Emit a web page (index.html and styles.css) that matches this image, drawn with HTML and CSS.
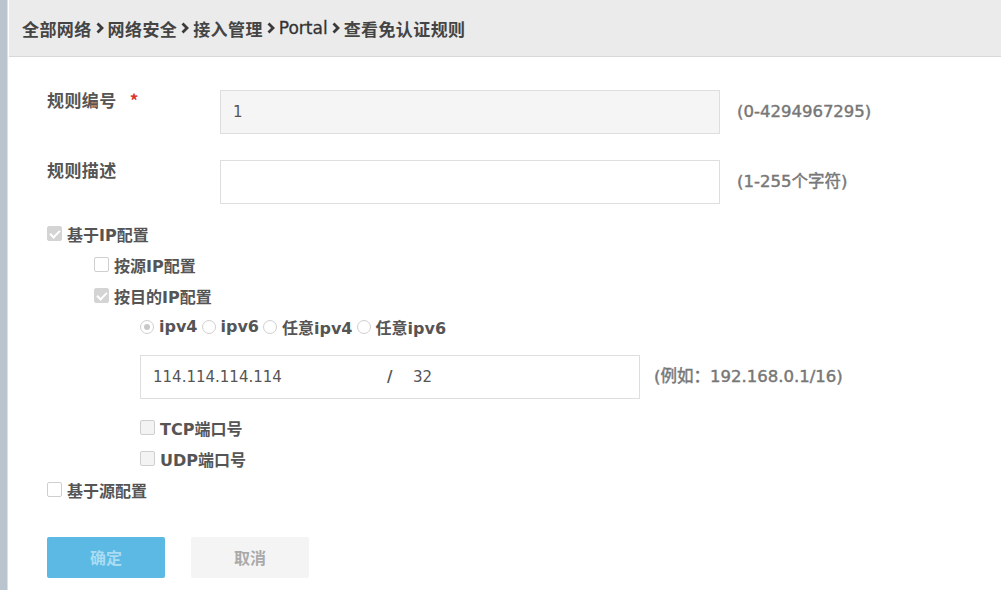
FILE: index.html
```html
<!DOCTYPE html>
<html lang="zh">
<head>
<meta charset="utf-8">
<link rel="stylesheet" href="styles.css">
</head>
<body>
<div class="page">
  <div class="sidebar"></div>
  <div class="main">
    <div class="header">
      <span>全部网络</span><svg class="chev" viewBox="0 0 8 12"><path d="M1.5 1.5 L6 6 L1.5 10.5"/></svg><span>网络安全</span><svg class="chev" viewBox="0 0 8 12"><path d="M1.5 1.5 L6 6 L1.5 10.5"/></svg><span>接入管理</span><svg class="chev" viewBox="0 0 8 12"><path d="M1.5 1.5 L6 6 L1.5 10.5"/></svg><span class="latin">Portal</span><svg class="chev" viewBox="0 0 8 12"><path d="M1.5 1.5 L6 6 L1.5 10.5"/></svg><span>查看免认证规则</span>
    </div>
    <div class="form">
      <div class="row">
        <div class="label">规则编号 <span class="req">*</span></div>
        <div class="input disabled">1</div>
        <div class="hint">(0-4294967295)</div>
      </div>
      <div class="row row2">
        <div class="label">规则描述</div>
        <div class="input"></div>
        <div class="hint">(1-255个字符)</div>
      </div>
      <div class="checks">
        <div class="line"><span class="cb checked"></span><span class="txt">基于IP配置</span></div>
        <div class="line lv1"><span class="cb"></span><span class="txt">按源IP配置</span></div>
        <div class="line lv1"><span class="cb checked"></span><span class="txt">按目的IP配置</span></div>
        <div class="line lv2 radios">
          <span class="rd on"></span><span class="rtxt">ipv4</span>
          <span class="rd"></span><span class="rtxt">ipv6</span>
          <span class="rd"></span><span class="rtxt">任意ipv4</span>
          <span class="rd"></span><span class="rtxt">任意ipv6</span>
        </div>
        <div class="iprow lv2">
          <div class="ipinput"><span class="ip">114.114.114.114</span><span class="slash">/</span><span class="mask">32</span></div>
          <div class="hint">(例如：192.168.0.1/16)</div>
        </div>
        <div class="line lv2 first"><span class="cb grey"></span><span class="txt">TCP端口号</span></div>
        <div class="line lv2"><span class="cb grey"></span><span class="txt">UDP端口号</span></div>
        <div class="line"><span class="cb"></span><span class="txt">基于源配置</span></div>
      </div>
      <div class="buttons">
        <div class="btn ok">确定</div>
        <div class="btn cancel">取消</div>
      </div>
    </div>
  </div>
</div>
</body>
</html>
```
FILE: styles.css
```css
html, body {
  margin: 0;
  padding: 0;
  background: #fff;
}
body {
  font-family: "DejaVu Sans", "Noto Sans CJK SC", sans-serif;
  color: #555;
  width: 1001px;
  height: 590px;
  overflow: hidden;
}
.page {
  display: flex;
  height: 590px;
}
.sidebar {
  width: 7px;
  background: #bac4ce;
  border-right: 1px solid #dde1e5;
  margin-right: 1px;
  flex: none;
}
.main {
  flex: 1;
}
.header {
  height: 56px;
  background: #ebebeb;
  border-bottom: 1px solid #d8d8d8;
  display: flex;
  align-items: center;
  padding-left: 13px;
  font-family: "Noto Sans CJK SC", sans-serif;
  font-size: 17px;
  font-weight: 700;
  color: #444;
  letter-spacing: 0.4px;
}
.header .latin {
  font-family: "DejaVu Sans", sans-serif;
  font-weight: 400;
  font-size: 17px;
  color: #333;
  letter-spacing: 0;
  -webkit-text-stroke: 0.3px #333;
}
.chev {
  width: 8px;
  height: 12px;
  margin: 0 4px 0 4px;
  flex: none;
}
.chev path {
  fill: none;
  stroke: #3a3a3a;
  stroke-width: 2.8;
}
.form {
  padding: 33px 0 0 38px;
}
.row {
  display: flex;
  align-items: flex-start;
}
.row2 {
  margin-top: 26px;
}
.label {
  width: 173px;
  line-height: 20px;
  font-family: "Noto Sans CJK SC", sans-serif;
  font-size: 17px;
  font-weight: 700;
  letter-spacing: 0.4px;
  color: #555;
  flex: none;
}
.req {
  color: #d9342b;
  margin-left: 9px;
}
.input {
  height: 42px;
  border: 1px solid #dedede;
  background: #fff;
  line-height: 42px;
  padding-left: 12px;
  font-size: 15px;
  color: #555;
  flex: none;
  width: 486px;
}
.input.disabled {
  background: #f5f5f5;
}
.hint {
  margin-left: 17px;
  line-height: 44px;
  font-size: 16.5px;
  font-weight: 400;
  -webkit-text-stroke: 0.45px #777;
  color: #777;
  flex: none;
}
.checks {
  margin-top: 14px;
}
.line {
  height: 31px;
  display: flex;
  align-items: center;
  font-size: 16px;
  font-weight: 700;
  color: #555;
}
.txt {
  font-size: 16px;
}
.lv1 {
  padding-left: 47px;
}
.lv2 {
  padding-left: 93px;
}
.cb {
  width: 13px;
  height: 13px;
  border: 1px solid #cfcfcf;
  border-radius: 2px;
  background: #fff;
  margin-right: 5px;
  position: relative;
  flex: none;
}
.cb.grey {
  background: #f3f3f3;
}
.cb.checked {
  background: #d4d4d4;
  border-color: #d4d4d4;
}
.cb.checked::after {
  content: "";
  position: absolute;
  left: 4px;
  top: 1px;
  width: 4px;
  height: 8px;
  border: solid #fff;
  border-width: 0 2px 2px 0;
  transform: rotate(45deg);
}
.radios .rd {
  width: 12px;
  height: 12px;
  border: 1px solid #d0d0d0;
  border-radius: 50%;
  background: #fff;
  margin-right: 5px;
  position: relative;
  flex: none;
}
.radios .rd.on::after {
  content: "";
  position: absolute;
  left: 3px;
  top: 3px;
  width: 6px;
  height: 6px;
  border-radius: 50%;
  background: #c8c8c8;
}
.rtxt {
  margin-right: 4px;
}
.iprow {
  display: flex;
  margin-top: 13px;
}
.ipinput {
  width: 486px;
  height: 42px;
  border: 1px solid #dedede;
  padding-left: 12px;
  display: flex;
  align-items: center;
  font-size: 15px;
  color: #555;
  flex: none;
}
.ip {
  width: 234px;
}
.slash {
  font-weight: 700;
  width: 26px;
}
.iprow .hint {
  margin-left: 14px;
}
.first {
  margin-top: 13px;
}
.buttons {
  display: flex;
  gap: 26px;
  margin-top: 32px;
}
.btn {
  width: 118px;
  height: 41px;
  line-height: 41px;
  text-align: center;
  font-family: "Noto Sans CJK SC", sans-serif;
  font-size: 16px;
  font-weight: 700;
  border-radius: 2px;
}
.btn.ok {
  background: #5cb9e4;
  color: #a9dcf2;
}
.btn.cancel {
  background: #f4f4f4;
  color: #aaa;
}
```
